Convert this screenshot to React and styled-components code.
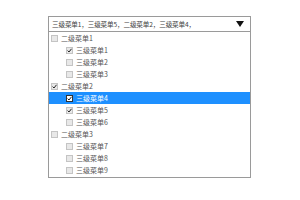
import React from 'react';
import styled, { createGlobalStyle } from 'styled-components';

const Global = createGlobalStyle`
	body {
		margin: 0;
		background: #fff;
		font-family: 'Noto Sans CJK SC', 'Noto Sans', sans-serif;
	}
`;

const Page = styled.div`
	width: 300px;
	height: 200px;
	padding: 16px 0 0 48px;
	box-sizing: border-box;
`;

const Select = styled.div`
	width: 203px;
`;

const Header = styled.div`
	display: flex;
	align-items: center;
	justify-content: space-between;
	height: 16px;
	box-sizing: border-box;
	border: 1px solid #9a9a9a;
	padding: 0 3px 0 3px;
	font-size: 6.6px;
	letter-spacing: -0.15px;
	color: #444;
	white-space: nowrap;
`;

const Arrow = styled.span`
	width: 0;
	height: 0;
	border-left: 4px solid transparent;
	border-right: 4px solid transparent;
	border-top: 6px solid #111;
	margin-right: 3px;
`;

const List = styled.div`
	border: 1px solid #9a9a9a;
	border-top: none;
	padding-bottom: 1px;
`;

const Row = styled.div`
	display: flex;
	align-items: center;
	height: 12px;
	padding-left: ${(p) => (p.$level === 2 ? 17 : 2)}px;
	font-size: 7px;
	color: ${(p) => (p.$active ? '#fff' : '#555')};
	background: ${(p) => (p.$active ? '#1e90ff' : 'transparent')};
	white-space: nowrap;
`;

const Box = styled.span`
	position: relative;
	width: 5px;
	height: 5px;
	margin-right: 3px;
	border: 1px solid ${(p) => (p.$active ? '#333' : '#c4c4c4')};
	background: ${(p) => (p.$active ? '#fff' : '#e8e8e8')};
	box-sizing: content-box;
	flex-shrink: 0;
`;

const Check = styled.svg`
	position: absolute;
	left: 0;
	top: 0;
	width: 5px;
	height: 5px;
`;

const items = [
	{ label: '二级菜单1', level: 1 },
	{ label: '三级菜单1', level: 2, checked: true },
	{ label: '三级菜单2', level: 2 },
	{ label: '三级菜单3', level: 2 },
	{ label: '二级菜单2', level: 1, checked: true },
	{ label: '三级菜单4', level: 2, checked: true, active: true },
	{ label: '三级菜单5', level: 2, checked: true },
	{ label: '三级菜单6', level: 2 },
	{ label: '二级菜单3', level: 1 },
	{ label: '三级菜单7', level: 2 },
	{ label: '三级菜单8', level: 2 },
	{ label: '三级菜单9', level: 2 },
];

function App() {
	return (
		<Page>
			<Global />
			<Select>
				<Header>
					<span>三级菜单1，三级菜单5，二级菜单2，三级菜单4，</span>
					<Arrow />
				</Header>
				<List>
					{items.map((it) => (
						<Row key={it.label} $level={it.level} $active={it.active}>
							<Box $active={it.active}>
								{it.checked && (
									<Check viewBox="0 0 5 5">
										<path d="M0.6 2.6 L2 4 L4.5 0.8" fill="none" stroke="#222" strokeWidth="1" />
									</Check>
								)}
							</Box>
							{it.label}
						</Row>
					))}
				</List>
			</Select>
		</Page>
	);
}

export default App;
